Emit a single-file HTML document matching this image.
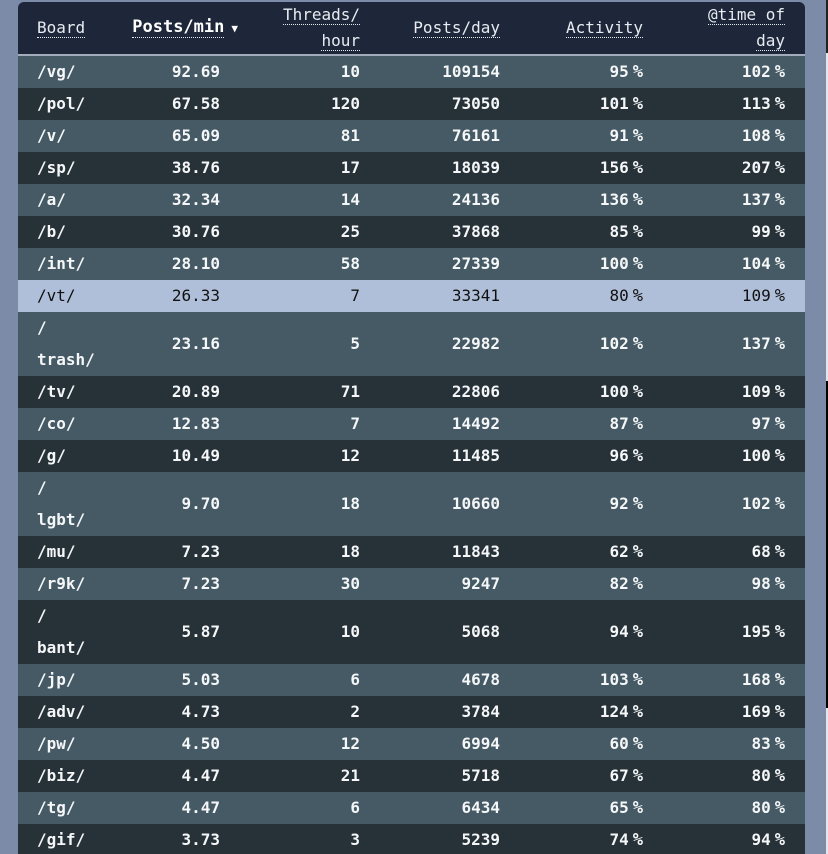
<!DOCTYPE html>
<html><head><style>
html,body{margin:0;padding:0;width:828px;height:854px;overflow:hidden;background:#7c8ba8;}
body{position:relative;font-family:"DejaVu Sans Mono","Liberation Mono",monospace;}
.side{position:absolute;left:826px;top:0;width:2px;height:854px;background:#e8e4ea;}
.side2{position:absolute;left:826px;top:381px;width:2px;height:327px;background:#000;}
.side3{position:absolute;left:826px;top:0;width:2px;height:53px;background:#222;}
.wrap{position:absolute;left:18px;top:2px;width:787px;border-radius:6px 6px 0 0;overflow:hidden;}
table{border-collapse:collapse;width:787px;table-layout:fixed;}
th{background:#1e2739;color:#e8ecf2;font-weight:normal;font-size:16px;line-height:26px;height:51px;padding:0 20px 0 0;text-align:right;vertical-align:middle;border-bottom:2px solid #a4acbc;white-space:nowrap;}
th span{border-bottom:1px dotted #e8ecf2;}
th.l{text-align:left;padding-left:19px;}
th.b{font-weight:bold;color:#fff;padding-right:2px;font-size:17px;}
td{color:#f4f6f8;font-weight:bold;font-size:16px;line-height:32px;height:32px;padding:0 20px 0 0;text-align:right;}
td:first-child{text-align:left;padding-left:19px;}
td i{font-style:normal;margin-left:4px;font-size:17px;}
tr.a td{background:#455a64;}
tr.d td{background:#263238;}
tr.h td{background:#b0bfd9;color:#111;font-weight:normal;}
</style></head><body>
<div class="side"></div><div class="side2"></div><div class="side3"></div>
<div class="wrap"><table>
<colgroup><col style="width:97px"><col style="width:125px"><col style="width:140px"><col style="width:140px"><col style="width:143px"><col style="width:142px"></colgroup>
<tr><th class="l"><span>Board</span></th><th class="b"><span>Posts/min</span><span style="border:0;font-size:11px;margin-left:7px">&#9660;</span></th><th><span>Threads/</span><br><span>hour</span></th><th><span>Posts/day</span></th><th><span>Activity</span></th><th><span>@time of</span><br><span>day</span></th></tr>
<tr class="a"><td>/vg/</td><td>92.69</td><td>10</td><td>109154</td><td>95<i>%</i></td><td>102<i>%</i></td></tr>
<tr class="d"><td>/pol/</td><td>67.58</td><td>120</td><td>73050</td><td>101<i>%</i></td><td>113<i>%</i></td></tr>
<tr class="a"><td>/v/</td><td>65.09</td><td>81</td><td>76161</td><td>91<i>%</i></td><td>108<i>%</i></td></tr>
<tr class="d"><td>/sp/</td><td>38.76</td><td>17</td><td>18039</td><td>156<i>%</i></td><td>207<i>%</i></td></tr>
<tr class="a"><td>/a/</td><td>32.34</td><td>14</td><td>24136</td><td>136<i>%</i></td><td>137<i>%</i></td></tr>
<tr class="d"><td>/b/</td><td>30.76</td><td>25</td><td>37868</td><td>85<i>%</i></td><td>99<i>%</i></td></tr>
<tr class="a"><td>/int/</td><td>28.10</td><td>58</td><td>27339</td><td>100<i>%</i></td><td>104<i>%</i></td></tr>
<tr class="h"><td>/vt/</td><td>26.33</td><td>7</td><td>33341</td><td>80<i>%</i></td><td>109<i>%</i></td></tr>
<tr class="a"><td>/<br>trash/</td><td>23.16</td><td>5</td><td>22982</td><td>102<i>%</i></td><td>137<i>%</i></td></tr>
<tr class="d"><td>/tv/</td><td>20.89</td><td>71</td><td>22806</td><td>100<i>%</i></td><td>109<i>%</i></td></tr>
<tr class="a"><td>/co/</td><td>12.83</td><td>7</td><td>14492</td><td>87<i>%</i></td><td>97<i>%</i></td></tr>
<tr class="d"><td>/g/</td><td>10.49</td><td>12</td><td>11485</td><td>96<i>%</i></td><td>100<i>%</i></td></tr>
<tr class="a"><td>/<br>lgbt/</td><td>9.70</td><td>18</td><td>10660</td><td>92<i>%</i></td><td>102<i>%</i></td></tr>
<tr class="d"><td>/mu/</td><td>7.23</td><td>18</td><td>11843</td><td>62<i>%</i></td><td>68<i>%</i></td></tr>
<tr class="a"><td>/r9k/</td><td>7.23</td><td>30</td><td>9247</td><td>82<i>%</i></td><td>98<i>%</i></td></tr>
<tr class="d"><td>/<br>bant/</td><td>5.87</td><td>10</td><td>5068</td><td>94<i>%</i></td><td>195<i>%</i></td></tr>
<tr class="a"><td>/jp/</td><td>5.03</td><td>6</td><td>4678</td><td>103<i>%</i></td><td>168<i>%</i></td></tr>
<tr class="d"><td>/adv/</td><td>4.73</td><td>2</td><td>3784</td><td>124<i>%</i></td><td>169<i>%</i></td></tr>
<tr class="a"><td>/pw/</td><td>4.50</td><td>12</td><td>6994</td><td>60<i>%</i></td><td>83<i>%</i></td></tr>
<tr class="d"><td>/biz/</td><td>4.47</td><td>21</td><td>5718</td><td>67<i>%</i></td><td>80<i>%</i></td></tr>
<tr class="a"><td>/tg/</td><td>4.47</td><td>6</td><td>6434</td><td>65<i>%</i></td><td>80<i>%</i></td></tr>
<tr class="d"><td>/gif/</td><td>3.73</td><td>3</td><td>5239</td><td>74<i>%</i></td><td>94<i>%</i></td></tr>
</table></div>
</body></html>
